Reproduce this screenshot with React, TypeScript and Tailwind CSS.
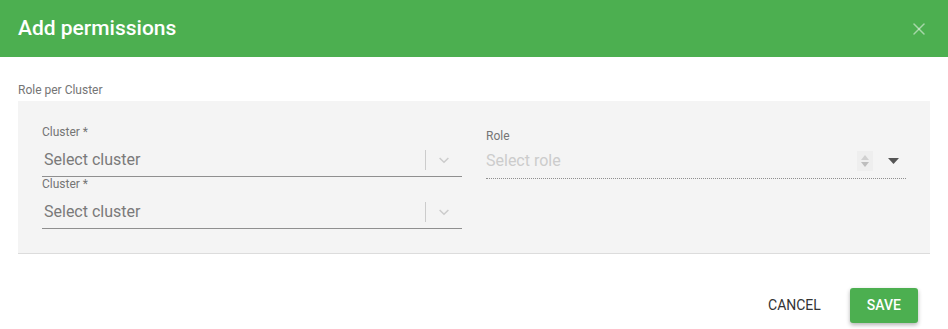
import { X } from "lucide-react"

function ClusterSelect() {
  return (
    <div className="flex flex-col">
      <label className="text-[12px] leading-[14px] text-[#757575]">Cluster *</label>
      <div className="flex items-center h-[38px] pt-[5px] border-b border-[#8f8f8f]">
        <span className="flex-1 pl-[2px] text-[16px] text-[#7a7a7a]">Select cluster</span>
        <span className="w-px h-[20px] bg-[#cccccc]" />
        <span className="w-[36px] flex justify-center">
          <svg width="14" height="14" viewBox="0 0 20 20" fill="#cccccc">
            <path d="M4.5 6.3 10 11.8l5.5-5.5 1.5 1.5-7 7-7-7z" />
          </svg>
        </span>
      </div>
    </div>
  )
}

export default function App() {
  return (
    <div className="w-[948px] h-[329px] bg-white font-['Roboto',sans-serif] flex flex-col">
      <div className="h-[57px] bg-[#4caf50] flex items-center justify-between pl-[18px] pr-[19px]">
        <h1 className="text-[21px] font-medium text-white">Add permissions</h1>
        <X className="w-[20px] h-[20px] text-white/50" strokeWidth={1.8} />
      </div>

      <div className="px-[18px] pt-[26px]">
        <div className="text-[12px] leading-[14px] text-[#757575]">Role per Cluster</div>
        <div className="mt-[4px] bg-[#f4f4f4] border-b border-[#dcdcdc] pl-[24px] pr-[24px] pt-[24px] h-[153px] flex gap-[24px]">
          <div className="w-[420px] flex flex-col">
            <ClusterSelect />
            <ClusterSelect />
          </div>
          <div className="flex-1 flex flex-col pt-[4px]">
            <label className="text-[12px] leading-[14px] text-[#757575]">Role</label>
            <div className="flex items-center h-[36px] border-b border-dotted border-[#8f8f8f]">
              <span className="flex-1 text-[16px] text-[#cccccc]">Select role</span>
              <span className="w-[16px] h-[20px] bg-[#eeeeee] flex flex-col items-center justify-center gap-[2px]">
                <svg width="8" height="5" viewBox="0 0 8 5" fill="#d0d0d0"><path d="M4 0l4 5H0z" /></svg>
                <svg width="8" height="5" viewBox="0 0 8 5" fill="#bdbdbd"><path d="M0 0h8L4 5z" /></svg>
              </span>
              <span className="w-[33px] flex justify-end pr-[7px]">
                <svg width="11" height="6" viewBox="0 0 11 6" fill="#555555"><path d="M0 0h11L5.5 6z" /></svg>
              </span>
            </div>
          </div>
        </div>
      </div>

      <div className="flex justify-end items-center gap-[13px] pr-[30px] pt-[34px]">
        <button className="h-[35px] px-[16px] text-[14px] text-[#333333] uppercase">Cancel</button>
        <button className="h-[35px] px-[17px] rounded-[3px] bg-[#4caf50] text-white text-[14px] font-medium uppercase shadow-[0_2px_4px_rgba(0,0,0,0.3)]">
          Save
        </button>
      </div>
    </div>
  )
}
